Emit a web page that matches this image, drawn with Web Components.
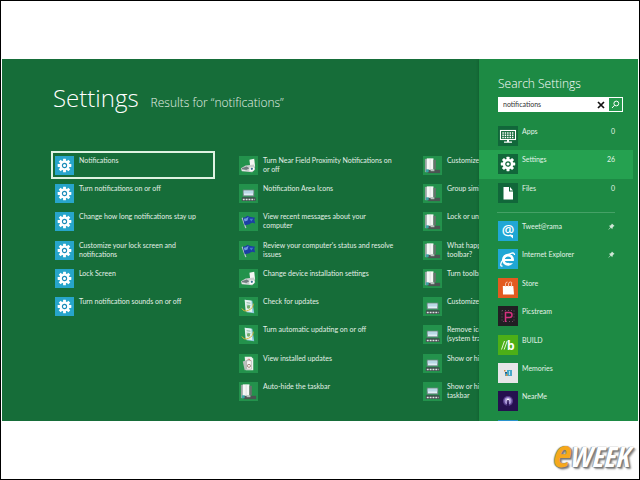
<!DOCTYPE html>
<html lang="en">
<head>
<meta charset="utf-8">
<title>Search Settings</title>
<style>
  body {
    margin: 0;
    background: #fff;
    font-family: Lato, "Open Sans", sans-serif;
  }
</style>
</head>
<body>
<slide-frame>
  <settings-screen>
    <results-title slot="title" query="notifications">Settings</results-title>

    <results-column slot="results">
      <result-item icon="gear" selected>Notifications</result-item>
      <result-item icon="gear">Turn notifications on or off</result-item>
      <result-item icon="gear">Change how long notifications stay up</result-item>
      <result-item icon="gear">Customize your lock screen and<br>notifications</result-item>
      <result-item icon="gear">Lock Screen</result-item>
      <result-item icon="gear">Turn notification sounds on or off</result-item>
    </results-column>
    <results-column slot="results">
      <result-item icon="device">Turn Near Field Proximity Notifications on<br>or off</result-item>
      <result-item icon="tray">Notification Area Icons</result-item>
      <result-item icon="flag">View recent messages about your<br>computer</result-item>
      <result-item icon="flag">Review your computer's status and resolve<br>issues</result-item>
      <result-item icon="device">Change device installation settings</result-item>
      <result-item icon="update">Check for updates</result-item>
      <result-item icon="update">Turn automatic updating on or off</result-item>
      <result-item icon="programs">View installed updates</result-item>
      <result-item icon="taskbar">Auto-hide the taskbar</result-item>
    </results-column>
    <results-column slot="results">
      <result-item icon="taskbar">Customize</result-item>
      <result-item icon="taskbar">Group simi</result-item>
      <result-item icon="taskbar">Lock or unl</result-item>
      <result-item icon="taskbar">What happ<br>toolbar?</result-item>
      <result-item icon="taskbar">Turn toolba</result-item>
      <result-item icon="tray">Customize</result-item>
      <result-item icon="tray">Remove ico<br>(system tra</result-item>
      <result-item icon="tray">Show or hi</result-item>
      <result-item icon="tray">Show or hi<br>taskbar</result-item>
    </results-column>

    <search-pane slot="pane" heading="Search Settings" query="notifications">
      <search-row slot="scopes" icon="apps" count="0">Apps</search-row>
      <search-row slot="scopes" icon="settings" count="26" selected>Settings</search-row>
      <search-row slot="scopes" icon="files" count="0">Files</search-row>
      <search-row icon="tweet" pinned>Tweet@rama</search-row>
      <search-row icon="ie" pinned>Internet Explorer</search-row>
      <search-row icon="store">Store</search-row>
      <search-row icon="picstream">Picstream</search-row>
      <search-row icon="build">BUILD</search-row>
      <search-row icon="memories">Memories</search-row>
      <search-row icon="nearme">NearMe</search-row>
      <search-row icon="blank"></search-row>
    </search-pane>
  </settings-screen>
  <brand-logo slot="footer"></brand-logo>
</slide-frame>

<script>
// All tiles are drawn on a 20x20 grid.
const gear = (hole) => {
  let teeth = '';
  for (let a = 0; a < 360; a += 45) {
    teeth += `<rect x="8.5" y="2.8" width="3" height="4" rx=".4" transform="rotate(${a} 10 10)"/>`;
  }
  return `<g fill="#fff">${teeth}<circle cx="10" cy="10" r="5.3"/></g>
    <circle cx="10" cy="10" r="2.2" fill="#fff" stroke="${hole}" stroke-width="1.2"/>`;
};

const ICONS = {
  gear: { bg: '#27a5cb', art: gear('#1c8cb8') },
  device: { bg: '#23924c', art: `
    <path d="M11 4l5-1 1 8-5 2z" fill="#f4f6f4"/>
    <path d="M2 13l5-3 9-1 1 5-3 3-11-1z" fill="#c9cfce"/>
    <path d="M3 13l5-2 3 2-4 2-4-1z" fill="#6f7b7d"/>
    <path d="M11 12h5v3l-3 1h-2z" fill="#fff"/>
    <circle cx="13.5" cy="13.5" r="1.2" fill="#3a6f91"/>
    <path d="M3 15h4" stroke="#f0f3f2"/>` },
  tray: { bg: '#23924c', art: `
    <rect x="4.5" y="6.5" width="11" height="6" fill="#dff0f5" stroke="#75878a"/>
    <path d="M5 7h10v3H5z" fill="#b9d9e6"/>
    <rect x="3" y="14" width="14.5" height="4" rx=".5" fill="#3f4d4c"/>
    <path d="M4 16.2h12.5" stroke="#dfe5e4" stroke-width="1.6" stroke-dasharray="2 1"/>` },
  flag: { bg: '#23924c', art: `
    <path d="M3.4 6l3.8 11" stroke="#b7c2d0" stroke-width="1.3"/>
    <path d="M4 6q3 0 5-2l2 1 6 1-1 2 1 4q-4-2-6 1l-5 1z" fill="#1b3fa4"/>
    <path d="M5 7q3 0 5-2l-1 4-3 1z" fill="#6f9ae0"/>
    <path d="M11 7l4 0-2 3z" fill="#4778cf"/>` },
  update: { bg: '#23924c', art: `
    <path d="M6 3l8 1 2 13-8-1z" fill="#8ec9df"/>
    <path d="M6 3l7 1 1 12-7-1z" fill="#e4f3ee"/>
    <path d="M8 6l4 .5M8 8.5l4 .5" stroke="#69a68a" stroke-width=".8"/>
    <path d="M3 12q2 4 7 2t5-7" fill="none" stroke="#d9b43c"/>
    <circle cx="10" cy="10.5" r="1.8" fill="#73ad6b"/>` },
  programs: { bg: '#23924c', art: `
    <path d="M6 3h7l2 2v12H7z" fill="#eef1ee"/>
    <path d="M4 8l5-2 2 9-5 2z" fill="#b9bfbd"/>
    <path d="M8 7h5v9H8z" fill="#f7f7f5" stroke="#9a9f9d" stroke-width=".6"/>
    <path d="M9 6q2-2 3 1" fill="none" stroke="#b5473f" stroke-width=".7"/>
    <circle cx="10.5" cy="12.5" r="1.6" fill="none" stroke="#8b6b5e" stroke-width=".8"/>` },
  taskbar: { bg: '#23924c', art: `
    <path d="M2 3h3v14H2z" fill="#9aa5a3"/>
    <path d="M4 2.5h7V15H4z" fill="#f5f7f6"/>
    <path d="M7.5 3v11" stroke="#cfd6d4" stroke-width=".7"/>
    <path d="M11 4h2.500v10H11z" fill="#69706e"/>
    <path d="M5 14.500h13V18H5z" fill="#4b5452"/>
    <path d="M3 14h3v3H3z" fill="#3ba4a6"/>
    <path d="M8 14h4v2H8z" fill="#b8c0be"/>` },
  apps: { bg: '#11673a', art: `
    <rect x="2.5" y="4.5" width="15" height="9" fill="none" stroke="#fff" stroke-width="1.1"/>
    <path d="M4.3 7h11.4M4.3 9.2h11.4M4.3 11.4h11.4" stroke="#fff" stroke-width="1.5" stroke-dasharray="1.5 .9"/>
    <path d="M9 13.5h2V16H9zM6 15.5h8v1.3H6z" fill="#fff"/>` },
  settings: { bg: '#11673a', art: gear('#11673a') },
  files: { bg: '#11673a', art: `
    <path d="M5.5 4h5.5v4.5h4v8H5.5z" fill="#fff"/>
    <path d="M12 4l3 3.5h-3z" fill="#fff"/>` },
  tweet: { bg: '#20a7d5', art: `
    <text x="10" y="13.5" text-anchor="middle" font-family="Open Sans" font-size="14" font-weight="600" fill="#fff">@</text>
    <path d="M11 14h4v3.5z" fill="#fff"/>` },
  ie: { bg: '#20a7d5', art: `
    <circle cx="10" cy="10.7" r="4.6" fill="none" stroke="#fff" stroke-width="2.8"/>
    <path d="M6 11h9" stroke="#fff" stroke-width="2"/>
    <path d="M11 12h6v2.2h-6z" fill="#20a7d5"/>
    <path d="M4.5 17q-3 .5-1-4 3-6 9-8.5 4-1.500 4 1.500" fill="none" stroke="#fff" stroke-width="1.3"/>` },
  store: { bg: '#e35a20', art: `
    <path d="M4.8 8h10.5l.7 8.5H5z" fill="#fff"/>
    <path d="M7.5 9V6q0-2 2-2M10.5 9V6q0-2 2-2t1 2v3" fill="none" stroke="#fbd9c8" stroke-width=".8"/>` },
  picstream: { bg: '#211f23', art: `
    <rect x="4" y="4.5" width="12" height="11" fill="none" stroke="#77526a" stroke-width=".9" stroke-dasharray="1 2"/>
    <path d="M7.5 16V6.5h4q2.5 0 2.5 2.5t-2.5 2.5h-4" fill="none" stroke="#d5317f" stroke-width="1.5"/>` },
  build: { bg: '#4caf17', art: `
    <path d="M3.5 14.5l3-8.5M6.2 14.5l3-8.5" stroke="#e3f5d8"/>
    <text x="9" y="14.5" font-family="Open Sans" font-size="12" font-weight="700" fill="#fff">b</text>` },
  memories: { bg: '#e6e6e8', art: `
    <path d="M9 7h5v6H7v-3h2z" fill="#48a8c9"/>
    <path d="M6 7h1.5v1.5H6zM8 11h1.5v2H8z" fill="#d48942"/>
    <path d="M7 9h2v1.5H7z" fill="#275d80"/>
    <path d="M11 8h1v4h-1z" fill="#b9e2ee"/>` },
  nearme: { bg: '#25104f', art: `
    <circle cx="10" cy="10" r="5" fill="#5b4390"/>
    <circle cx="10" cy="9.7" r="3.5" fill="#a795d4"/>
    <circle cx="10" cy="9" r="1.5" fill="#fff"/>
    <path d="M9.3 9h1.4l.4 6H8.9z" fill="#2d165c"/>` },
  blank: { bg: '#2a93cf', art: '' }
};

const tile = (name) => {
  const icon = ICONS[name] || ICONS.blank;
  return `<svg class="tile" viewBox="0 0 20 20" aria-hidden="true" style="background:${icon.bg}">${icon.art}</svg>`;
};

class SlideFrame extends HTMLElement {
  connectedCallback() {
    this.attachShadow({ mode: 'open' }).innerHTML = `
      <style>
        :host {
          display: flex;
          flex-direction: column;
          box-sizing: border-box;
          min-height: 100vh;
          padding-top: 58px;
          border: 1px solid #000;
        }
        main {
          flex: 1;
          display: flex;
          margin: 0 1px;
        }
        footer {
          display: flex;
          justify-content: flex-end;
          align-items: center;
          box-sizing: border-box;
          height: 58px;
          padding: 8px 10px 0 0;
        }
      </style>
      <main><slot></slot></main>
      <footer><slot name="footer"></slot></footer>
    `;
  }
}

class SettingsScreen extends HTMLElement {
  connectedCallback() {
    this.attachShadow({ mode: 'open' }).innerHTML = `
      <style>
        :host {
          flex: 1;
          display: flex;
          min-width: 0;
          background: #166d39;
          color: #fff;
          overflow: hidden;
        }
        .content {
          flex: 1;
          min-width: 0;
          padding: 18px 0 0 49px;
          overflow: hidden;
        }
        .results {
          display: flex;
          gap: 20px;
          margin-top: 32px;
        }
      </style>
      <section class="content">
        <slot name="title"></slot>
        <div class="results"><slot name="results"></slot></div>
      </section>
      <slot name="pane"></slot>
    `;
  }
}

class ResultsTitle extends HTMLElement {
  connectedCallback() {
    this.attachShadow({ mode: 'open' }).innerHTML = `
      <style>
        :host {
          display: flex;
          align-items: baseline;
          gap: 12px;
          height: 42px;
          padding-left: 2px;
          font-family: "Open Sans", Lato, sans-serif;
          line-height: 42px;
          white-space: nowrap;
        }
        h1, p {
          margin: 0;
          font-weight: 300;
        }
        h1 { font-size: 24px; }
        p {
          color: #e3f0e7;
          font-size: 12px;
        }
      </style>
      <h1><slot></slot></h1>
      <p>Results for “${this.getAttribute('query')}”</p>
    `;
  }
}

class ResultsColumn extends HTMLElement {
  connectedCallback() {
    this.attachShadow({ mode: 'open' }).innerHTML = `
      <style>
        :host {
          flex: 0 0 164px;
          display: grid;
          grid-template-rows: repeat(9, 1fr);
          grid-template-columns: minmax(0, 1fr);
          min-width: 0;
          min-height: 254px;
        }
      </style>
      <slot></slot>
    `;
  }
}

class ResultItem extends HTMLElement {
  connectedCallback() {
    this.attachShadow({ mode: 'open' }).innerHTML = `
      <style>
        :host { display: flex; }
        button {
          flex: 1;
          display: flex;
          align-items: flex-start;
          gap: 5px;
          min-width: 0;
          padding: 3px 2px 2px;
          border: 2px solid transparent;
          background: none;
          color: #e3f0e7;
          font: 7px/9px Lato, "Open Sans", sans-serif;
          text-align: left;
          white-space: nowrap;
        }
        :host([selected]) button { border-color: #dff3e2; }
        .tile {
          flex: none;
          width: 19px;
          height: 19px;
        }
      </style>
      <button type="button">${tile(this.getAttribute('icon'))}<span><slot></slot></span></button>
    `;
  }
}

class SearchPane extends HTMLElement {
  connectedCallback() {
    this.attachShadow({ mode: 'open' }).innerHTML = `
      <style>
        :host {
          flex: 0 0 159px;
          display: flex;
          flex-direction: column;
          box-sizing: border-box;
          min-width: 0;
          padding-top: 15px;
          background: #1d8a44;
          box-shadow: 0 0 3px rgba(0, 40, 15, 0.3);
        }
        h2 {
          margin: 0 19px 4px;
          font-family: "Open Sans", Lato, sans-serif;
          font-size: 12px;
          font-weight: 300;
          line-height: 19px;
          white-space: nowrap;
        }
        form {
          display: flex;
          height: 15px;
          margin: 0 15px 10px 19px;
          background: #fff;
        }
        input {
          flex: 1;
          min-width: 0;
          padding: 0 5px;
          border: 0;
          outline: 0;
          background: none;
          color: #333;
          font: 7px/15px Lato, "Open Sans", sans-serif;
        }
        form button {
          display: flex;
          align-items: center;
          justify-content: center;
          width: 15px;
          padding: 0;
          border: 0;
          background: none;
        }
        form button[type="submit"] {
          border: 1px solid #fff;
          background: #23994c;
        }
        hr {
          width: 118px;
          height: 1px;
          margin: 5px 0 4px 18px;
          border: 0;
          background: #45a166;
        }
        nav {
          display: grid;
          grid-auto-rows: 1fr;
        }
        .scopes { min-height: 85px; }
        /* the app list runs on below the screen edge */
        .clip {
          flex: 1 1 0;
          min-height: 0;
          overflow: hidden;
        }
        .apps { min-height: 227px; }
      </style>
      <h2>${this.getAttribute('heading')}</h2>
      <form>
        <input type="text" aria-label="Search" value="${this.getAttribute('query')}">
        <button type="reset" aria-label="Clear">
          <svg width="8" height="8" viewBox="0 0 8 8"><path d="M1 1l6 6M7 1L1 7" stroke="#111" stroke-width="1.7"/></svg>
        </button>
        <button type="submit" aria-label="Search">
          <svg width="9" height="9" viewBox="0 0 9 9" fill="none" stroke="#fff"><circle cx="5.3" cy="3.5" r="2.4"/><path d="M3.5 5.3L1 8"/></svg>
        </button>
      </form>
      <nav class="scopes"><slot name="scopes"></slot></nav>
      <hr>
      <div class="clip"><nav class="apps"><slot></slot></nav></div>
    `;
  }
}

class SearchRow extends HTMLElement {
  connectedCallback() {
    const count = this.getAttribute('count');
    const pin = `<svg class="pin" viewBox="0 0 8 8" aria-hidden="true"><path d="M4.5.5l3 3-1 .3-1.3 1.5-.2 1.7-1.800-1.700L.6 7.600.4 7.400 2.700 4.800 1 3l1.700-.2L4.200 1.500z" fill="#cfe6d6"/></svg>`;
    this.attachShadow({ mode: 'open' }).innerHTML = `
      <style>
        :host { display: flex; }
        a {
          flex: 1;
          display: flex;
          gap: 4px;
          margin-right: 5px;
          padding: 4px 18px 4px 19px;
          color: #e3f3e8;
          font-size: 7px;
          line-height: 10px;
          text-decoration: none;
          white-space: nowrap;
        }
        :host([selected]) a { background: #25a150; }
        .tile {
          flex: none;
          width: 20px;
          height: 20px;
        }
        .label { flex: 1; }
        .pin {
          width: 7px;
          height: 7px;
          margin-top: 2px;
        }
      </style>
      <a href="#">
        ${tile(this.getAttribute('icon'))}
        <span class="label"><slot></slot></span>
        ${count !== null ? `<span>${count}</span>` : ''}
        ${this.hasAttribute('pinned') ? pin : ''}
      </a>
    `;
  }
}

class BrandLogo extends HTMLElement {
  connectedCallback() {
    this.attachShadow({ mode: 'open' }).innerHTML = `
      <style>
        :host {
          display: block;
          font: italic bold 28px/30px "Liberation Sans Narrow", "Open Sans Condensed", "Roboto Condensed", "Liberation Sans", sans-serif;
          color: #fff;
          text-shadow: 0 0 1px #777, 1px 1px 1px #777, 2px 2px 2px #888, -1px 0 1px #aaa;
        }
        .e {
          color: #f6a81c;
          font-size: 38px;
        }
      </style>
      <span class="e">e</span>WEEK
    `;
  }
}

customElements.define('slide-frame', SlideFrame);
customElements.define('settings-screen', SettingsScreen);
customElements.define('results-title', ResultsTitle);
customElements.define('results-column', ResultsColumn);
customElements.define('result-item', ResultItem);
customElements.define('search-pane', SearchPane);
customElements.define('search-row', SearchRow);
customElements.define('brand-logo', BrandLogo);
</script>
</body>
</html>
